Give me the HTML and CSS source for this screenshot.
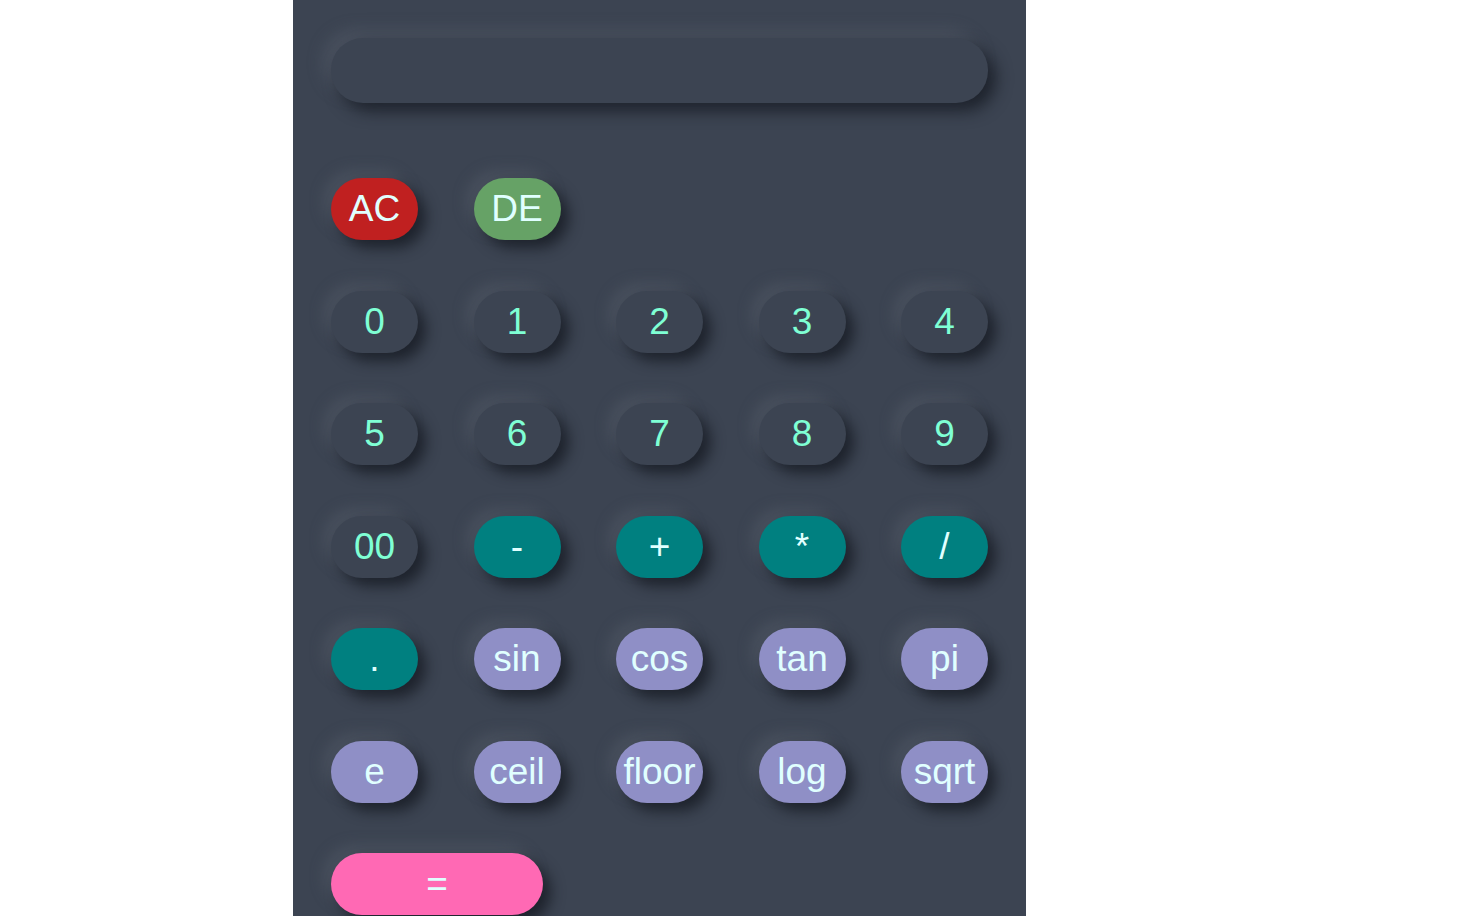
FILE: index.html
```html
<!DOCTYPE html>
<html>
<head>
<meta charset="utf-8">
<link rel="stylesheet" href="styles.css">
</head>
<body>
<div class="calc">
  <div class="display"></div>
  <div class="keys">
    <button class="key red">AC</button>
    <button class="key green">DE</button>
    <span></span><span></span><span></span>
    <button class="key">0</button>
    <button class="key">1</button>
    <button class="key">2</button>
    <button class="key">3</button>
    <button class="key">4</button>
    <button class="key">5</button>
    <button class="key">6</button>
    <button class="key">7</button>
    <button class="key">8</button>
    <button class="key">9</button>
    <button class="key">00</button>
    <button class="key teal">-</button>
    <button class="key teal">+</button>
    <button class="key teal">*</button>
    <button class="key teal">/</button>
    <button class="key teal">.</button>
    <button class="key lav">sin</button>
    <button class="key lav">cos</button>
    <button class="key lav">tan</button>
    <button class="key lav">pi</button>
    <button class="key lav">e</button>
    <button class="key lav">ceil</button>
    <button class="key lav">floor</button>
    <button class="key lav">log</button>
    <button class="key lav">sqrt</button>
    <button class="key pink eq">=</button>
  </div>
</div>
</body>
</html>
```
FILE: styles.css
```css
html, body {
  margin: 0;
  padding: 0;
  background: #ffffff;
  height: 100%;
  overflow: hidden;
}
body {
  font-family: "Liberation Sans", Arial, sans-serif;
}
.calc {
  margin-left: 293px;
  width: 733px;
  min-height: 1000px;
  background: #3c4452;
  padding: 38px 38px 0 38px;
  box-sizing: border-box;
}
.display {
  height: 65px;
  border-radius: 32px;
  background: #3c4452;
  box-shadow: 8px 8px 16px rgba(20, 24, 32, 0.75), -8px -8px 16px rgba(90, 98, 110, 0.45);
}
.keys {
  margin-top: 75px;
  display: grid;
  grid-template-columns: repeat(5, 87px);
  justify-content: space-between;
  grid-auto-rows: 62px;
  row-gap: 50.5px;
}
.key {
  border: none;
  outline: none;
  width: 87px;
  height: 62px;
  border-radius: 31px;
  background: #3c4452;
  color: #7fffd4;
  font-family: "Liberation Sans", Arial, sans-serif;
  font-size: 37px;
  padding: 0;
  display: flex;
  align-items: center;
  justify-content: center;
  white-space: nowrap;
  box-shadow: 8px 8px 14px rgba(20, 24, 32, 0.75), -8px -8px 14px rgba(90, 98, 110, 0.4);
}
.red { background: #c02020; color: #e0ffff; }
.green { background: #66a266; color: #e0ffff; }
.teal { background: #008080; color: #e0ffff; }
.lav { background: #8f8fc6; color: #e0ffff; }
.pink { background: #ff69b4; color: #e0ffff; }
.eq {
  width: 212px;
  grid-column: 1 / span 2;
}
```
